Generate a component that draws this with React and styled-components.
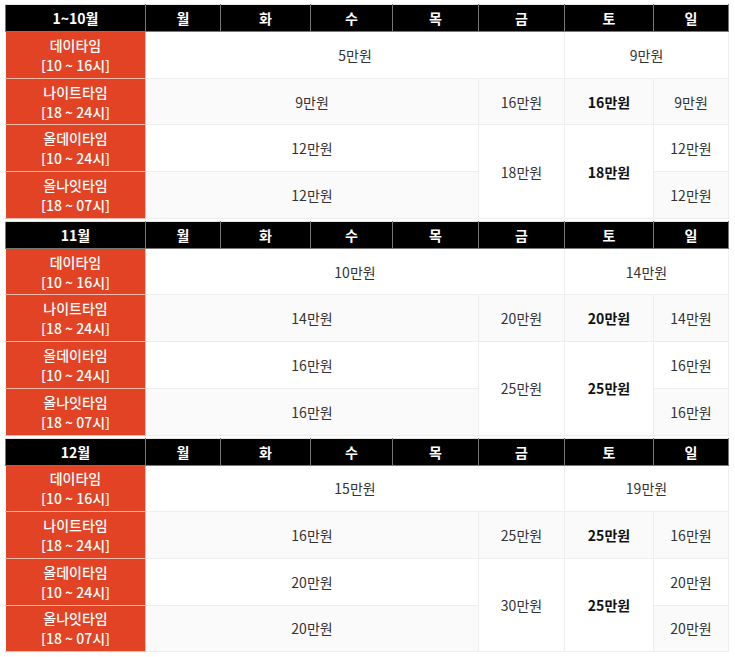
import styled, { createGlobalStyle } from "styled-components";

const GlobalStyle = createGlobalStyle`
  body {
    margin: 0;
    padding: 4px 5px;
    background: #fff;
    font-family: "Noto Sans CJK KR", "Noto Sans", sans-serif;
  }
`

const Page = styled.div`
  display: flex;
  flex-direction: column;
  gap: 2px;
`

const Table = styled.table`
  width: 724px;
  border-collapse: collapse;
  table-layout: fixed;
  font-size: 14px;
  color: #333;
`

const HeadCell = styled.th`
  height: 26px;
  padding: 0;
  background: #000;
  color: #fff;
  font-weight: 700;
  font-size: 14px;
  text-align: center;
  border: 1px solid #777;
  border-top-color: #e4e4e4;
`

const Label = styled.td`
  height: 45.7px;
  padding: 0;
  background: #e24325;
  color: #fff;
  text-align: center;
  line-height: 20px;
  font-weight: 500;
  border: 1px solid #f3b8a8;
  border-left-color: #fff;
`

const Cell = styled.td`
  padding: 0;
  text-align: center;
  background: ${p => (p.$shade ? "#fafafa" : "#fff")};
  font-weight: ${p => (p.$bold ? 700 : 400)};
  color: ${p => (p.$bold ? "#111" : "#333")};
  border: 1px solid #eee;
`

const days = ["월", "화", "수", "목", "금", "토", "일"]
const widths = [140, 75, 90, 82, 86, 86, 89, 75]

const data = [
  { month: "1~10월", day: "5만원", dayWeekend: "9만원", night: "9만원", nightFri: "16만원", nightSat: "16만원", nightSun: "9만원", all: "12만원", allFri: "18만원", allSat: "18만원", allSun: "12만원", allNight: "12만원", allNightSun: "12만원" },
  { month: "11월", day: "10만원", dayWeekend: "14만원", night: "14만원", nightFri: "20만원", nightSat: "20만원", nightSun: "14만원", all: "16만원", allFri: "25만원", allSat: "25만원", allSun: "16만원", allNight: "16만원", allNightSun: "16만원" },
  { month: "12월", day: "15만원", dayWeekend: "19만원", night: "16만원", nightFri: "25만원", nightSat: "25만원", nightSun: "16만원", all: "20만원", allFri: "30만원", allSat: "25만원", allSun: "20만원", allNight: "20만원", allNightSun: "20만원" },
]

function PriceTable({ t }) {
  return (
    <Table>
      <colgroup>
        {widths.map((w, i) => <col key={i} style={{ width: w }} />)}
      </colgroup>
      <thead>
        <tr>
          <HeadCell>{t.month}</HeadCell>
          {days.map(d => <HeadCell key={d}>{d}</HeadCell>)}
        </tr>
      </thead>
      <tbody>
        <tr>
          <Label>데이타임<br />[10 ~ 16시]</Label>
          <Cell colSpan={5}>{t.day}</Cell>
          <Cell colSpan={2}>{t.dayWeekend}</Cell>
        </tr>
        <tr>
          <Label>나이트타임<br />[18 ~ 24시]</Label>
          <Cell colSpan={4} $shade>{t.night}</Cell>
          <Cell $shade>{t.nightFri}</Cell>
          <Cell $shade $bold>{t.nightSat}</Cell>
          <Cell $shade>{t.nightSun}</Cell>
        </tr>
        <tr>
          <Label>올데이타임<br />[10 ~ 24시]</Label>
          <Cell colSpan={4}>{t.all}</Cell>
          <Cell rowSpan={2}>{t.allFri}</Cell>
          <Cell rowSpan={2} $bold>{t.allSat}</Cell>
          <Cell>{t.allSun}</Cell>
        </tr>
        <tr>
          <Label>올나잇타임<br />[18 ~ 07시]</Label>
          <Cell colSpan={4} $shade>{t.allNight}</Cell>
          <Cell $shade>{t.allNightSun}</Cell>
        </tr>
      </tbody>
    </Table>
  )
}

export default function App() {
  return (
    <>
      <GlobalStyle />
      <Page>
        {data.map(t => <PriceTable key={t.month} t={t} />)}
      </Page>
    </>
  )
}
